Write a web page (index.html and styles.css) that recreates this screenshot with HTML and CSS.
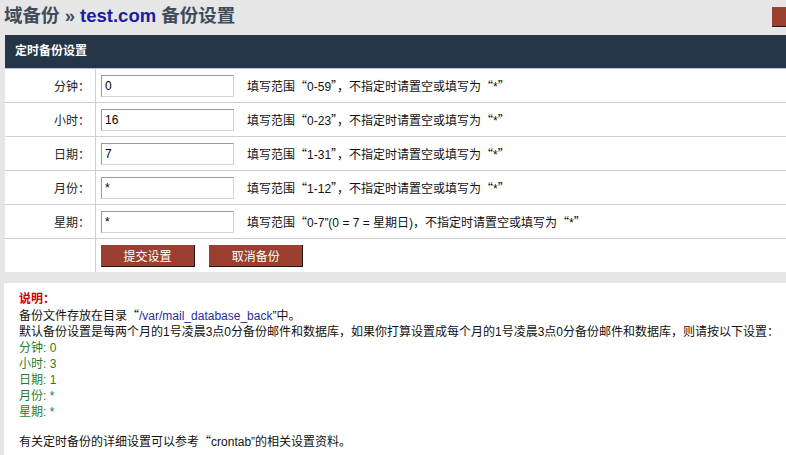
FILE: index.html
```html
<!DOCTYPE html>
<html lang="zh-CN">
<head>
    <meta charset="UTF-8">
    <title>备份设置</title>
    <link rel="stylesheet" href="styles.css">
</head>
<body>
    <div class="topbar">
        <h1>域备份 » <span class="domain">test.com</span> 备份设置</h1>
        <span class="top-btn"></span>
    </div>

    <div class="panel">
        <div class="panel-head">定时备份设置</div>
        <table class="form-table">
            <tr>
                <td class="label">分钟：</td>
                <td class="field"><input type="text" value="0"></td>
                <td class="hint">填写范围<span class="q">“</span>0-59<span class="q">”</span>，不指定时请置空或填写为<span class="q">“</span>*<span class="q">”</span></td>
            </tr>
            <tr>
                <td class="label">小时：</td>
                <td class="field"><input type="text" value="16"></td>
                <td class="hint">填写范围<span class="q">“</span>0-23<span class="q">”</span>，不指定时请置空或填写为<span class="q">“</span>*<span class="q">”</span></td>
            </tr>
            <tr>
                <td class="label">日期：</td>
                <td class="field"><input type="text" value="7"></td>
                <td class="hint">填写范围<span class="q">“</span>1-31<span class="q">”</span>，不指定时请置空或填写为<span class="q">“</span>*<span class="q">”</span></td>
            </tr>
            <tr>
                <td class="label">月份：</td>
                <td class="field"><input type="text" value="*"></td>
                <td class="hint">填写范围<span class="q">“</span>1-12<span class="q">”</span>，不指定时请置空或填写为<span class="q">“</span>*<span class="q">”</span></td>
            </tr>
            <tr>
                <td class="label">星期：</td>
                <td class="field"><input type="text" value="*"></td>
                <td class="hint">填写范围<span class="q">“</span>0-7”(0 = 7 = 星期日)，不指定时请置空或填写为<span class="q">“</span>*<span class="q">”</span></td>
            </tr>
            <tr>
                <td class="label"></td>
                <td class="field" colspan="2">
                    <button class="btn">提交设置</button>
                    <button class="btn">取消备份</button>
                </td>
            </tr>
        </table>
    </div>

    <div class="notes">
        <div class="notes-title">说明：</div>
        <div>备份文件存放在目录<span class="q">“</span><span class="path">/var/mail_database_back</span>”中。</div>
        <div>默认备份设置是每两个月的1号凌晨3点0分备份邮件和数据库，如果你打算设置成每个月的1号凌晨3点0分备份邮件和数据库，则请按以下设置：</div>
        <div class="green">分钟: 0</div>
        <div class="green">小时: 3</div>
        <div class="green">日期: 1</div>
        <div class="green">月份: *</div>
        <div class="green">星期: *</div>
        <div class="notes-foot">有关定时备份的详细设置可以参考<span class="q">“</span>crontab”的相关设置资料。</div>
    </div>
</body>
</html>
```

FILE: styles.css
```css
html, body {
    margin: 0;
    padding: 0;
    overflow: hidden;
}
body {
    background-color: #e6e6e6;
    font-family: "Liberation Sans", "Noto Sans CJK SC", sans-serif;
    font-size: 12px;
    color: #111;
}
.q {
    font-family: "Noto Sans CJK SC", sans-serif;
}
.topbar {
    display: flex;
    justify-content: space-between;
    align-items: flex-start;
    height: 35px;
}
.topbar h1 {
    margin: 0;
    padding: 4px 0 0 4px;
    font-family: "Liberation Sans", "Noto Sans CJK SC", sans-serif;
    font-size: 18.5px;
    line-height: 24px;
    color: #3e4c5c;
}
.topbar .domain {
    color: #1c1ca0;
}
.top-btn {
    display: block;
    width: 14px;
    height: 19px;
    margin-top: 7px;
    background-color: #9b3f30;
    border-bottom: 1px solid #2a1a16;
}
.panel {
    margin-left: 5px;
    background-color: #fff;
}
.panel-head {
    height: 33px;
    line-height: 33px;
    padding-left: 10px;
    background-color: #253547;
    color: #fff;
    font-weight: bold;
    font-size: 12px;
    border-bottom: 1px solid #a9c4d6;
}
.form-table {
    width: 100%;
    border-collapse: collapse;
}
.form-table td {
    height: 33px;
    padding: 0;
    border-bottom: 1px solid #cfcfcf;
}
.form-table .label {
    width: 85px;
    padding-right: 5px;
    text-align: right;
    border-right: 1px solid #cfcfcf;
    color: #222;
}
.form-table .field {
    width: 146px;
    padding-left: 5px;
}
.form-table .hint {
    color: #111;
}
.form-table input {
    box-sizing: border-box;
    width: 133px;
    height: 22px;
    padding: 2px 3px;
    border: 1px solid #d4d4d4;
    border-top-color: #9a9a9a;
    border-left-color: #9a9a9a;
    font-family: "Liberation Sans", sans-serif;
    font-size: 12px;
    color: #000;
}
.form-table tr:last-child td {
    border-bottom: none;
}
.btn {
    width: 94px;
    height: 22px;
    margin-right: 11px;
    padding: 0;
    background-color: #9b3f30;
    color: #fff;
    border: none;
    border-right: 1px solid #1e1410;
    border-bottom: 1px solid #1e1410;
    font-family: "Noto Sans CJK SC", sans-serif;
    font-size: 12px;
    cursor: pointer;
}
.notes {
    margin: 11px 0 0 4px;
    padding: 8px 0 20px 15px;
    background-color: #fff;
    line-height: 16px;
    white-space: nowrap;
}
.notes-title {
    color: #d00000;
    font-weight: bold;
}
.notes .path {
    color: #2b2ba0;
}
.notes .green {
    color: #1f7f1f;
}
.notes-foot {
    margin-top: 13px;
}
```
